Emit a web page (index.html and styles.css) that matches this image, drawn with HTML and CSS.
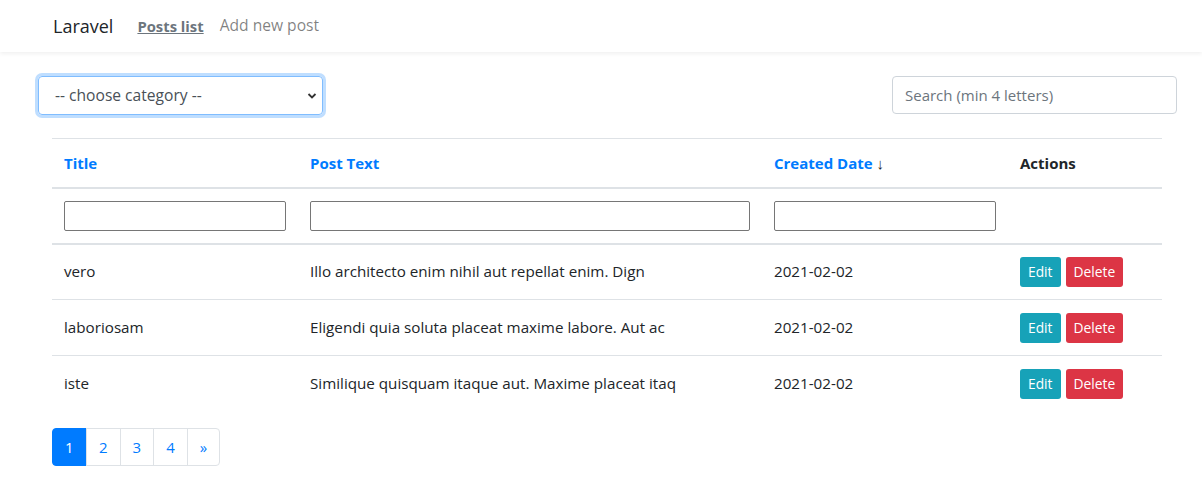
FILE: index.html
```html
<!DOCTYPE html>
<html>
<head>
<meta charset="utf-8">
<link rel="stylesheet" href="styles.css">
</head>
<body>
<nav class="navbar">
  <span class="brand">Laravel</span>
  <a class="nav-link active">Posts list</a>
  <a class="nav-link">Add new post</a>
</nav>
<main class="main">
  <div class="toolbar">
    <div class="select">
      <span>-- choose category --</span>
      <svg class="chev" width="10" height="8" viewBox="0 0 10 8"><path d="M1.5 2 L5 5.5 L8.5 2" fill="none" stroke="#333" stroke-width="1.8"/></svg>
    </div>
    <div class="search">Search (min 4 letters)</div>
  </div>
  <table class="table">
    <colgroup><col class="c1"><col class="c2"><col class="c3"><col class="c4"></colgroup>
    <thead>
      <tr class="head">
        <th class="link">Title</th>
        <th class="link">Post Text</th>
        <th class="link">Created Date <span class="arrow">↓</span></th>
        <th>Actions</th>
      </tr>
      <tr class="filters">
        <th><div class="finput"></div></th>
        <th><div class="finput"></div></th>
        <th><div class="finput"></div></th>
        <th></th>
      </tr>
    </thead>
    <tbody>
      <tr><td>vero</td><td>Illo architecto enim nihil aut repellat enim. Dign</td><td>2021-02-02</td><td><span class="btn edit">Edit</span><span class="btn del">Delete</span></td></tr>
      <tr><td>laboriosam</td><td>Eligendi quia soluta placeat maxime labore. Aut ac</td><td>2021-02-02</td><td><span class="btn edit">Edit</span><span class="btn del">Delete</span></td></tr>
      <tr><td>iste</td><td>Similique quisquam itaque aut. Maxime placeat itaq</td><td>2021-02-02</td><td><span class="btn edit">Edit</span><span class="btn del">Delete</span></td></tr>
    </tbody>
  </table>
  <ul class="pagination">
    <li class="page active">1</li>
    <li class="page">2</li>
    <li class="page">3</li>
    <li class="page">4</li>
    <li class="page last">»</li>
  </ul>
</main>
</body>
</html>
```
FILE: styles.css
```css
* { box-sizing: border-box; }
html, body { margin: 0; padding: 0; background: #fff; }
body {
  font-family: "Open Sans", "Noto Sans", sans-serif;
  font-size: 16px;
  color: #212529;
  line-height: 1.5;
}
.navbar {
  height: 52px;
  display: flex;
  align-items: center;
  padding-left: 53px;
  background: #fff;
  box-shadow: 0 2px 4px rgba(0,0,0,0.06);
}
.brand { font-size: 18px; color: #212529; margin-right: 24px; }
.nav-link { font-size: 15.6px; color: rgba(0,0,0,0.5); margin-right: 16px; }
.nav-link.active { color: #6c757d; font-weight: 700; text-decoration: underline; font-size: 14.8px; }
.main { padding: 23px 25px 0 37px; }
.toolbar { display: flex; justify-content: space-between; align-items: center; height: 40px; }
.select {
  width: 285px; height: 39px;
  margin-left: 1px;
  border: 1px solid #80bdff;
  border-radius: 4px;
  box-shadow: 0 0 0 3px rgba(0,123,255,0.25);
  display: flex; align-items: center; justify-content: space-between;
  padding: 1px 4px 0 16px;
  color: #495057;
  font-size: 15.6px;
}
.chev { margin-right: 1px; }
.search {
  width: 285px; height: 38px;
  border: 1px solid #ced4da;
  border-radius: 4px;
  display: flex; align-items: center;
  padding-left: 12px;
  color: #6c757d;
  font-size: 15px;
}
.table {
  margin: 23px 0 0 15px;
  width: 1110px;
  border-collapse: collapse;
  table-layout: fixed;
}
.c1 { width: 246px; } .c2 { width: 464px; } .c3 { width: 246px; } .c4 { width: 154px; }
th, td { text-align: left; vertical-align: middle; padding: 12px; font-size: 15px; }
td { font-size: 15.2px; }
.head th { border-top: 1px solid #dee2e6; border-bottom: 2px solid #dee2e6; font-weight: 700; height: 49px; }
.head th.link { color: #007bff; }
.arrow { color: #212529; font-weight: 400; }
.filters th { border-bottom: 2px solid #dee2e6; height: 56px; }
.finput { height: 30px; width: 222px; border: 1px solid #767676; border-radius: 2px; }
.filters th:nth-child(2) .finput { width: 440px; }
td { border-top: 1px solid #dee2e6; height: 56px; }
tbody tr:first-child td { border-top: none; }
.btn {
  display: inline-block;
  height: 30px; line-height: 30px;
  padding: 0 8px;
  color: #fff;
  font-size: 13.8px;
  border-radius: 3px;
  vertical-align: middle;
}
.edit { background: #17a2b8; margin-right: 5px; }
.del { background: #dc3545; }
.pagination {
  list-style: none; margin: 16px 0 0 15px; padding: 0;
  display: flex;
}
.page {
  height: 38px; line-height: 36px;
  padding: 0 12px;
  border: 1px solid #dee2e6;
  margin-left: -1px;
  color: #007bff;
  font-size: 15px;
}
.page.active { background: #007bff; border-color: #007bff; color: #fff; border-radius: 4px 0 0 4px; margin-left: 0; width: 35px; }
.page.last { border-radius: 0 4px 4px 0; }
```
